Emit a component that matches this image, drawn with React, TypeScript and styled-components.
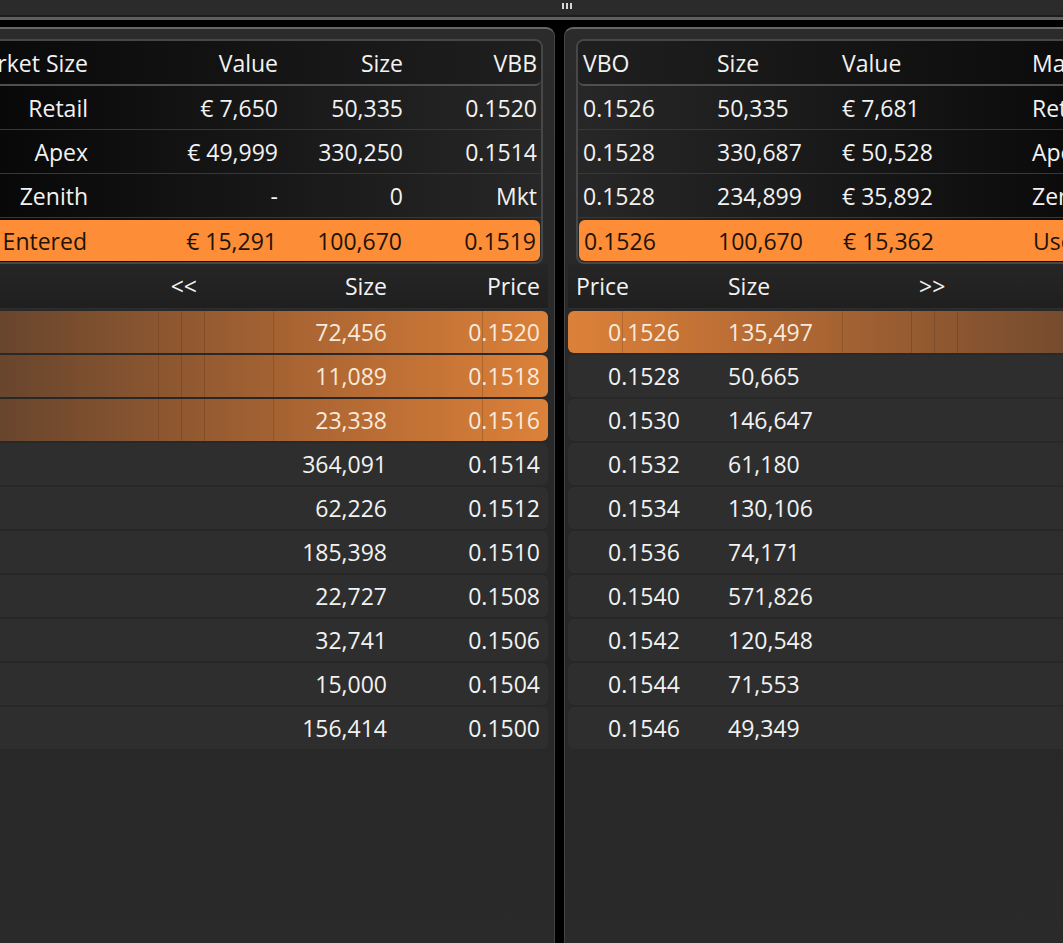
import React from 'react';
import styled, { createGlobalStyle, css } from 'styled-components';

type Side = 'bid' | 'ask';

const GlobalStyle = createGlobalStyle`
    html, body {
        margin: 0;
        padding: 0;
        background: #000;
    }
    body {
        font-family: 'Open Sans', 'Noto Sans', 'Liberation Sans', sans-serif;
        color: #f2f2f2;
        overflow: hidden;
    }
    * {
        box-sizing: border-box;
    }
`;

const Screen = styled.div`
    height: 100vh;
    display: flex;
    flex-direction: column;
    overflow: hidden;
    background: #000;
`;

const TopBar = styled.div`
    height: 17px;
    flex: none;
    display: flex;
    align-items: center;
    padding-left: 562px;
    background: #2b2b2b;
    border-bottom: 2px solid #1d1d1d;
`;

const Grip = styled.div`
    display: flex;
    gap: 2px;
    margin-top: -3px;
`;

const GripBar = styled.span`
    width: 2px;
    height: 6px;
    background: #d6d6d6;
`;

const Rule = styled.div`
    height: 3px;
    flex: none;
    background: #5f5f5f;
`;

const Board = styled.div`
    flex: 1;
    display: flex;
    gap: 9px;
    margin-left: -65px;
    padding-top: 7px;
    min-height: 0;
`;

const Panel = styled.section`
    width: 620px;
    flex: none;
    padding-top: 11px;
    border: 1px solid #444;
    border-top: 2px solid #666;
    border-bottom: none;
    border-radius: 9px 9px 0 0;
    background: linear-gradient(to bottom, #2b2b2b, #272727 60%, #2a2a2a);
`;

const Summary = styled.div<{ $side: Side }>`
    margin: -1px 11px 0;
    border: 2px solid #474747;
    border-radius: 8px;
    overflow: hidden;
    padding-bottom: 1px;
    background: ${p =>
        p.$side === 'bid'
            ? 'linear-gradient(to left, #272727, #050505)'
            : 'linear-gradient(to right, #272727, #050505)'};
`;

const gridCols = (side: Side) =>
    side === 'bid' ? 'minmax(0, 1fr) 190px 125px 134px' : '134px 125px 190px minmax(0, 1fr)';

const SummaryHead = styled.div<{ $side: Side }>`
    display: grid;
    grid-template-columns: ${p => gridCols(p.$side)};
    align-items: center;
    height: 45px;
    border-bottom: 2px solid #4f4f4f;
    border-radius: 0 0 6px 6px;
    background: ${p =>
        p.$side === 'bid'
            ? 'linear-gradient(to left, #1f1f1f, #080808)'
            : 'linear-gradient(to right, #1f1f1f, #080808)'};
`;

const SummaryRow = styled.div<{ $side: Side; $mine?: boolean }>`
    display: grid;
    grid-template-columns: ${p => gridCols(p.$side)};
    align-items: center;
    height: 44px;
    border-bottom: 1px solid #383838;
    ${p =>
        p.$mine &&
        css`
            height: 41px;
            margin: 2px 1px 0;
            border-bottom: none;
            border-radius: 6px;
            background: #fd8d36;
            color: #1f1308;
        `}
`;

const Cell = styled.div<{ $side: Side }>`
    padding: 0 4px 0 5px;
    font-size: 23px;
    white-space: nowrap;
    display: flex;
    justify-content: ${p => (p.$side === 'bid' ? 'flex-end' : 'flex-start')};
`;

const DepthSection = styled.div<{ $side: Side }>`
    padding: 0 ${p => (p.$side === 'bid' ? '6px' : '3px')};
`;

const depthCols = (side: Side) =>
    side === 'bid' ? 'minmax(0, 1fr) 150px 148px' : '152px 150px minmax(0, 1fr)';

const DepthHead = styled.div<{ $side: Side }>`
    display: grid;
    grid-template-columns: ${p => depthCols(p.$side)};
    align-items: center;
    height: 45px;
    margin-bottom: 2px;
    font-size: 23px;
    background: linear-gradient(to bottom, #262626, #1f1f1f);
    border-bottom: 1px solid #2e2e2e;
`;

const ColText = styled.div<{ $side: Side; $pad: number }>`
    white-space: nowrap;
    text-align: ${p => (p.$side === 'bid' ? 'right' : 'left')};
    ${p => (p.$side === 'bid' ? `padding-right: ${p.$pad}px;` : `padding-left: ${p.$pad}px;`)}
`;

const DepthRow = styled.div<{ $side: Side; $hot?: boolean }>`
    position: relative;
    display: grid;
    grid-template-columns: ${p => depthCols(p.$side)};
    align-items: center;
    height: 42px;
    margin-bottom: 2px;
    border-radius: 6px;
    font-size: 23px;
    background: #2e2e2e;
    ${p =>
        p.$hot &&
        css`
            color: #f8eadc;
            background: linear-gradient(
                ${p.$side === 'bid' ? 'to left' : 'to right'},
                #dc8139 0%,
                #b86c34 30%,
                #5c3f2c 100%
            );
        `}
`;

const Tick = styled.span<{ $side: Side; $at: number }>`
    position: absolute;
    top: 0;
    bottom: 0;
    width: 1px;
    background: rgba(60, 30, 10, 0.22);
    ${p => (p.$side === 'bid' ? `right: ${p.$at}px;` : `left: ${p.$at}px;`)}
`;

type SummaryLine = { market: string; value: string; size: string; price: string };

const bidSummary: SummaryLine[] = [
    { market: 'Retail', value: '€ 7,650', size: '50,335', price: '0.1520' },
    { market: 'Apex', value: '€ 49,999', size: '330,250', price: '0.1514' },
    { market: 'Zenith', value: '-', size: '0', price: 'Mkt' },
    { market: 'User Entered', value: '€ 15,291', size: '100,670', price: '0.1519' },
];

const askSummary: SummaryLine[] = [
    { market: 'Retail', value: '€ 7,681', size: '50,335', price: '0.1526' },
    { market: 'Apex', value: '€ 50,528', size: '330,687', price: '0.1528' },
    { market: 'Zenith', value: '€ 35,892', size: '234,899', price: '0.1528' },
    { market: 'User Entered', value: '€ 15,362', size: '100,670', price: '0.1526' },
];

const bidDepth = [
    ['72,456', '0.1520'],
    ['11,089', '0.1518'],
    ['23,338', '0.1516'],
    ['364,091', '0.1514'],
    ['62,226', '0.1512'],
    ['185,398', '0.1510'],
    ['22,727', '0.1508'],
    ['32,741', '0.1506'],
    ['15,000', '0.1504'],
    ['156,414', '0.1500'],
];

const askDepth = [
    ['135,497', '0.1526'],
    ['50,665', '0.1528'],
    ['146,647', '0.1530'],
    ['61,180', '0.1532'],
    ['130,106', '0.1534'],
    ['74,171', '0.1536'],
    ['571,826', '0.1540'],
    ['120,548', '0.1542'],
    ['71,553', '0.1544'],
    ['49,349', '0.1546'],
];

const ticks = { bid: [65, 274, 343, 366, 389], ask: [54, 274, 343, 366, 389] };

const BookSide = ({ side }: { side: Side }) => {
    const isBid = side === 'bid';
    const summary = isBid ? bidSummary : askSummary;
    const depth = isBid ? bidDepth : askDepth;
    const hotCount = isBid ? 3 : 1;

    const head = ['Market Size', 'Value', 'Size', isBid ? 'VBB' : 'VBO'];
    const headCells = isBid ? head : [...head].reverse();

    return (
        <Panel>
            <Summary $side={side}>
                <SummaryHead $side={side}>
                    {headCells.map(h => (
                        <Cell key={h} $side={side}>
                            {h}
                        </Cell>
                    ))}
                </SummaryHead>
                {summary.map((row, i) => {
                    const cells = [row.market, row.value, row.size, row.price];
                    const ordered = isBid ? cells : [...cells].reverse();
                    return (
                        <SummaryRow key={row.market} $side={side} $mine={i === summary.length - 1}>
                            {ordered.map((c, j) => (
                                <Cell key={j} $side={side}>
                                    {c}
                                </Cell>
                            ))}
                        </SummaryRow>
                    );
                })}
            </Summary>
            <DepthSection $side={side}>
                {isBid ? (
                    <DepthHead $side={side}>
                        <ColText $side={side} $pad={53}>
                            {'<<'}
                        </ColText>
                        <ColText $side={side} $pad={13}>
                            Size
                        </ColText>
                        <ColText $side={side} $pad={8}>
                            Price
                        </ColText>
                    </DepthHead>
                ) : (
                    <DepthHead $side={side}>
                        <ColText $side={side} $pad={8}>
                            Price
                        </ColText>
                        <ColText $side={side} $pad={8}>
                            Size
                        </ColText>
                        <ColText $side={side} $pad={49}>
                            {'>>'}
                        </ColText>
                    </DepthHead>
                )}
                {depth.map(([size, price], i) => (
                    <DepthRow key={price} $side={side} $hot={i < hotCount}>
                        {i < hotCount && ticks[side].map(t => <Tick key={t} $side={side} $at={t} />)}
                        {isBid ? (
                            <>
                                <span />
                                <ColText $side={side} $pad={13}>
                                    {size}
                                </ColText>
                                <ColText $side={side} $pad={8}>
                                    {price}
                                </ColText>
                            </>
                        ) : (
                            <>
                                <ColText $side={side} $pad={40}>
                                    {price}
                                </ColText>
                                <ColText $side={side} $pad={8}>
                                    {size}
                                </ColText>
                                <span />
                            </>
                        )}
                    </DepthRow>
                ))}
            </DepthSection>
        </Panel>
    );
};

const App = () => {
    return (
        <>
            <GlobalStyle />
            <Screen>
                <TopBar>
                    <Grip>
                        <GripBar />
                        <GripBar />
                        <GripBar />
                    </Grip>
                </TopBar>
                <Rule />
                <Board>
                    <BookSide side="bid" />
                    <BookSide side="ask" />
                </Board>
            </Screen>
        </>
    );
};

export default App;
